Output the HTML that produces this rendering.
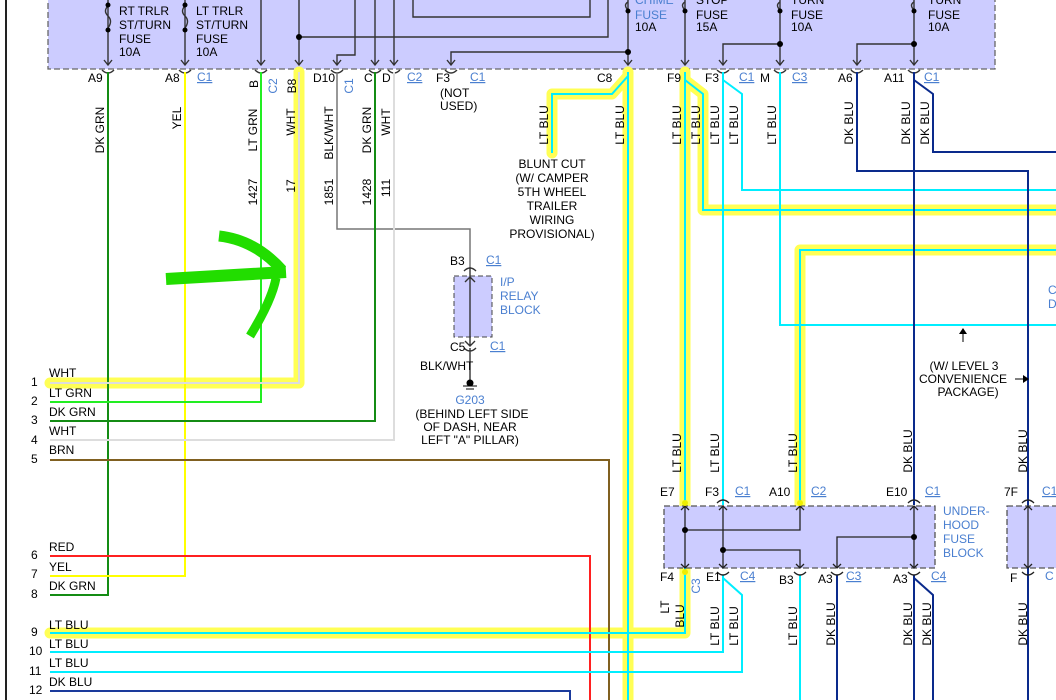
<!DOCTYPE html><html><head><meta charset="utf-8"><style>html,body{margin:0;padding:0;background:#fff}svg{display:block}text{font-family:"Liberation Sans",Arial,sans-serif;font-size:12px;fill:#000}.b{fill:#4a7fd0}.u{text-decoration:underline}</style></head><body>
<svg width="1056" height="700" viewBox="0 0 1056 700" xmlns="http://www.w3.org/2000/svg">
<line x1="6" y1="0" x2="6" y2="700" stroke="#222" stroke-width="2"/>
<rect x="48" y="-2" width="947" height="71" fill="#ccccff" stroke="#666" stroke-dasharray="6,3" stroke-width="1.3"/>
<g stroke="#333" stroke-width="1.4" fill="none">
<path d="M108 0V65M185 0V65M261 0V65M299 0V65M375 0V65M394 0V65M628 0V65M685 0V65M780 0V65M914 0V65"/>
<path d="M413 0V17H590V0M299 37H608V0M451 65V52H628M337 65V55H355V0M723 65V44H780M857 65V44H914"/>
<path d="M104 60l4 5 4-5M181 60l4 5 4-5M257 60l4 5 4-5M295 60l4 5 4-5M333 60l4 5 4-5M371 60l4 5 4-5M390 60l4 5 4-5M447 60l4 5 4-5M624 60l4 5 4-5M681 60l4 5 4-5M719 60l4 5 4-5M776 60l4 5 4-5M853 60l4 5 4-5M910 60l4 5 4-5"/>
<path d="M102 70q6 6 12 0M179 70q6 6 12 0M255 70q6 6 12 0M331 70q6 6 12 0M369 70q6 6 12 0M388 70q6 6 12 0M445 70q6 6 12 0M717 70q6 6 12 0M774 70q6 6 12 0M851 70q6 6 12 0M908 70q6 6 12 0"/>
<path d="M108 6q-5 5 0 10q5 5 0 12M185 6q-5 5 0 10q5 5 0 12M628 2q-5 3 0 8M685 2q-5 3 0 8M780 2q-5 3 0 8M914 2q-5 3 0 8"/>
</g>
<g fill="#000"><circle cx="108" cy="5" r="2.5"/><circle cx="108" cy="30" r="2.5"/><circle cx="185" cy="5" r="2.5"/><circle cx="185" cy="30" r="2.5"/><circle cx="299" cy="37" r="3"/><circle cx="628" cy="52" r="3"/><circle cx="628" cy="11" r="2.5"/><circle cx="685" cy="11" r="2.5"/><circle cx="780" cy="11" r="2.5"/><circle cx="914" cy="11" r="2.5"/><circle cx="780" cy="44" r="3"/><circle cx="914" cy="44" r="3"/></g>
<text x="119" y="15">RT TRLR</text><text x="119" y="29">ST/TURN</text><text x="119" y="43">FUSE</text><text x="119" y="56">10A</text>
<text x="196" y="15">LT TRLR</text><text x="196" y="29">ST/TURN</text><text x="196" y="43">FUSE</text><text x="196" y="56">10A</text>
<text x="635" y="4" class="b">CHIME</text><text x="635" y="19" class="b">FUSE</text><text x="635" y="31">10A</text>
<text x="696" y="4">STOP</text><text x="696" y="19">FUSE</text><text x="696" y="31">15A</text>
<text x="791" y="4">TURN</text><text x="791" y="19">FUSE</text><text x="791" y="31">10A</text>
<text x="928" y="4">TURN</text><text x="928" y="19">FUSE</text><text x="928" y="31">10A</text>
<g stroke="#ffff55" stroke-width="11" fill="none" stroke-linejoin="round" stroke-linecap="round">
<path d="M299 72V383H50"/>
<path d="M628 72V700M628 76L612 94H552V153"/>
<path d="M685 72V575M685 80L703 94V210H1056"/>
<path d="M1056 250H800V505"/>
<path d="M685 575V633H50"/>
</g>
<g fill="none" stroke-width="2">
<path d="M108 72V595H50" stroke="#148c14"/>
<path d="M185 72V576H50" stroke="#ffff00"/>
<path d="M261 72V402H50" stroke="#22ee22"/>
<path d="M299 72V383H50" stroke="#dddddd"/>
<path d="M337 72V229H470V267" stroke="#777" stroke-width="1.5"/>
<path d="M375 72V421H50" stroke="#148c14"/>
<path d="M394 72V440H50" stroke="#dddddd"/>
<path d="M50 460H609V700" stroke="#806020"/>
<path d="M50 556H590V700" stroke="#ff2020"/>
<path d="M50 691H570V700" stroke="#1a3a9c"/>
<path d="M628 72V700M628 76L612 94H552V153" stroke="#00eeff"/>
<path d="M685 72V575M685 80L703 94V210H1056" stroke="#00eeff"/>
<path d="M723 72V505M723 80L742 94V190H1056" stroke="#00eeff"/>
<path d="M780 72V325H1056" stroke="#00eeff"/>
<path d="M1056 250H800V505" stroke="#00eeff"/>
<path d="M685 575V633H50M723 575V652H50M723 578L742 595V672H50M800 575V700" stroke="#00eeff"/>
<path d="M857 72V171H1028V700M914 72V505M914 80L933 94V152H1056M837 575V700M914 575V700M914 578L933 595V700" stroke="#0a2a8c"/>
</g>
<text x="88" y="82">A9</text><text x="165" y="82">A8</text><text x="197" y="81" class="b u">C1</text>
<text x="313" y="82">D10</text><text x="364" y="82">C</text><text x="382" y="82">D</text><text x="407" y="81" class="b u">C2</text>
<text x="436" y="82">F3</text><text x="470" y="81" class="b u">C1</text><text x="440" y="97">(NOT</text><text x="440" y="110">USED)</text>
<text x="597" y="82">C8</text><text x="667" y="82">F9</text><text x="705" y="82">F3</text><text x="739" y="81" class="b u">C1</text><text x="760" y="82">M</text><text x="792" y="81" class="b u">C3</text>
<text x="838" y="82">A6</text><text x="884" y="82">A11</text><text x="924" y="81" class="b u">C1</text>
<g font-size="12">
<text transform="translate(258,84) rotate(-90)" text-anchor="middle">B</text>
<text transform="translate(277,86) rotate(-90)" text-anchor="middle" class="b">C2</text>
<text transform="translate(296,86) rotate(-90)" text-anchor="middle">B8</text>
<text transform="translate(353,86) rotate(-90)" text-anchor="middle" class="b">C1</text>
<text transform="translate(104,130) rotate(-90)" text-anchor="middle">DK GRN</text>
<text transform="translate(181,118) rotate(-90)" text-anchor="middle">YEL</text>
<text transform="translate(257,130) rotate(-90)" text-anchor="middle">LT GRN</text>
<text transform="translate(295,122) rotate(-90)" text-anchor="middle">WHT</text>
<text transform="translate(333,133) rotate(-90)" text-anchor="middle">BLK/WHT</text>
<text transform="translate(371,130) rotate(-90)" text-anchor="middle">DK GRN</text>
<text transform="translate(390,122) rotate(-90)" text-anchor="middle">WHT</text>
<text transform="translate(257,192) rotate(-90)" text-anchor="middle">1427</text>
<text transform="translate(295,186) rotate(-90)" text-anchor="middle">17</text>
<text transform="translate(333,192) rotate(-90)" text-anchor="middle">1851</text>
<text transform="translate(371,192) rotate(-90)" text-anchor="middle">1428</text>
<text transform="translate(390,188) rotate(-90)" text-anchor="middle">111</text>
<text transform="translate(548,125) rotate(-90)" text-anchor="middle">LT BLU</text>
<text transform="translate(624,125) rotate(-90)" text-anchor="middle">LT BLU</text>
<text transform="translate(681,125) rotate(-90)" text-anchor="middle">LT BLU</text>
<text transform="translate(700,125) rotate(-90)" text-anchor="middle">LT BLU</text>
<text transform="translate(719,125) rotate(-90)" text-anchor="middle">LT BLU</text>
<text transform="translate(738,125) rotate(-90)" text-anchor="middle">LT BLU</text>
<text transform="translate(776,125) rotate(-90)" text-anchor="middle">LT BLU</text>
<text transform="translate(853,123) rotate(-90)" text-anchor="middle">DK BLU</text>
<text transform="translate(910,123) rotate(-90)" text-anchor="middle">DK BLU</text>
<text transform="translate(929,123) rotate(-90)" text-anchor="middle">DK BLU</text>
<text transform="translate(681,453) rotate(-90)" text-anchor="middle">LT BLU</text>
<text transform="translate(719,453) rotate(-90)" text-anchor="middle">LT BLU</text>
<text transform="translate(797,453) rotate(-90)" text-anchor="middle">LT BLU</text>
<text transform="translate(912,451) rotate(-90)" text-anchor="middle">DK BLU</text>
<text transform="translate(1027,451) rotate(-90)" text-anchor="middle">DK BLU</text>
<text transform="translate(669,607) rotate(-90)" text-anchor="middle">LT</text>
<text transform="translate(684,616) rotate(-90)" text-anchor="middle">BLU</text>
<text transform="translate(700,586) rotate(-90)" text-anchor="middle" class="b">C3</text>
<text transform="translate(719,626) rotate(-90)" text-anchor="middle">LT BLU</text>
<text transform="translate(738,626) rotate(-90)" text-anchor="middle">LT BLU</text>
<text transform="translate(797,626) rotate(-90)" text-anchor="middle">LT BLU</text>
<text transform="translate(835,624) rotate(-90)" text-anchor="middle">DK BLU</text>
<text transform="translate(912,624) rotate(-90)" text-anchor="middle">DK BLU</text>
<text transform="translate(931,624) rotate(-90)" text-anchor="middle">DK BLU</text>
<text transform="translate(1027,624) rotate(-90)" text-anchor="middle">DK BLU</text>
</g>
<g text-anchor="middle"><text x="552" y="168">BLUNT CUT</text><text x="552" y="182">(W/ CAMPER</text><text x="552" y="196">5TH WHEEL</text><text x="552" y="210">TRAILER</text><text x="552" y="224">WIRING</text><text x="552" y="238">PROVISIONAL)</text></g>
<rect x="454" y="276" width="38" height="61" fill="#ccccff" stroke="#444" stroke-dasharray="5,3"/>
<path d="M470 267V346M465 282l5-5 5 5M464 271q6-6 12 0M465 341l5 5 5-5M464 348q6 6 12 0M470 348V380" stroke="#333" stroke-width="1.4" fill="none"/>
<text x="450" y="265">B3</text><text x="486" y="264" class="b u">C1</text>
<text x="500" y="286" class="b">I/P</text><text x="500" y="300" class="b">RELAY</text><text x="500" y="314" class="b">BLOCK</text>
<text x="450" y="351">C5</text><text x="490" y="350" class="b u">C1</text>
<text x="420" y="370">BLK/WHT</text>
<circle cx="470" cy="383" r="3.5"/><path d="M463 386H477M466 389H474" stroke="#000"/>
<g text-anchor="middle"><text x="470" y="404" class="b">G203</text><text x="472" y="418">(BEHIND LEFT SIDE</text><text x="470" y="431">OF DASH, NEAR</text><text x="470" y="444">LEFT "A" PILLAR)</text></g>
<path d="M963 342V332M1015 379H1024" stroke="#000" fill="none"/>
<path d="M959 334l4-6 4 6zM1023 375l6 4-6 4z" fill="#000"/>
<g text-anchor="middle"><text x="964" y="370">(W/ LEVEL 3</text><text x="963" y="383">CONVENIENCE</text><text x="968" y="396">PACKAGE)</text></g>
<text x="1048" y="294" class="b">C</text><text x="1048" y="308" class="b">D</text>
<rect x="664" y="506" width="271" height="62" fill="#ccccff" stroke="#555" stroke-dasharray="6,3" stroke-width="1.3"/>
<rect x="1007" y="506" width="60" height="62" fill="#ccccff" stroke="#555" stroke-dasharray="6,3" stroke-width="1.3"/>
<g stroke="#222" stroke-width="1.3" fill="none">
<path d="M685 506V568M723 506V568M914 506V568M1028 506V568"/>
<path d="M685 530H800V506M723 550H800V568M914 537H837V568"/>
<path d="M681 510l4-4 4 4M719 510l4-4 4 4M796 510l4-4 4 4M910 510l4-4 4 4M1024 510l4-4 4 4M681 564l4 4 4-4M719 564l4 4 4-4M796 564l4 4 4-4M833 564l4 4 4-4M910 564l4 4 4-4M1024 564l4 4 4-4"/>
<path d="M717 503q6-6 12 0M908 503q6-6 12 0M1022 503q6-6 12 0M717 572q6 6 12 0M794 572q6 6 12 0M831 572q6 6 12 0M908 572q6 6 12 0M1022 572q6 6 12 0"/>
</g>
<g><circle cx="685" cy="530" r="3"/><circle cx="723" cy="550" r="3"/><circle cx="914" cy="537" r="3"/><circle cx="685" cy="503" r="3" fill="#ee0"/><circle cx="800" cy="503" r="3" fill="#ee0"/><circle cx="685" cy="572" r="3" fill="#ee0"/></g>
<text x="660" y="496">E7</text><text x="705" y="496">F3</text><text x="735" y="495" class="b u">C1</text><text x="769" y="496">A10</text><text x="811" y="495" class="b u">C2</text><text x="886" y="496">E10</text><text x="925" y="495" class="b u">C1</text><text x="1004" y="496">7F</text><text x="1042" y="495" class="b u">C1</text>
<text x="943" y="515" class="b">UNDER-</text><text x="943" y="529" class="b">HOOD</text><text x="943" y="543" class="b">FUSE</text><text x="943" y="557" class="b">BLOCK</text>
<text x="660" y="581">F4</text><text x="706" y="581">E1</text><text x="740" y="580" class="b u">C4</text><text x="779" y="584">B3</text><text x="818" y="583">A3</text><text x="846" y="580" class="b u">C3</text><text x="893" y="583">A3</text><text x="931" y="580" class="b u">C4</text><text x="1010" y="582">F</text><text x="1045" y="580" class="b">C</text>
<g><text x="31" y="386">1</text><text x="49" y="377">WHT</text>
<text x="31" y="405">2</text><text x="49" y="397">LT GRN</text>
<text x="31" y="424">3</text><text x="49" y="416">DK GRN</text>
<text x="31" y="444">4</text><text x="49" y="435">WHT</text>
<text x="31" y="463">5</text><text x="49" y="454">BRN</text>
<text x="31" y="559">6</text><text x="49" y="551">RED</text>
<text x="31" y="578">7</text><text x="49" y="571">YEL</text>
<text x="31" y="598">8</text><text x="49" y="590">DK GRN</text>
<text x="31" y="636">9</text><text x="49" y="629">LT BLU</text>
<text x="29" y="655">10</text><text x="49" y="648">LT BLU</text>
<text x="29" y="675">11</text><text x="49" y="667">LT BLU</text>
<text x="29" y="694">12</text><text x="49" y="686">DK BLU</text></g>
<g stroke="#22dd00" fill="none" stroke-linecap="butt">
<path d="M166 279L286 272" stroke-width="12"/>
<path d="M219 236Q255 240 282 270" stroke-width="11"/>
<path d="M276 278Q272 300 250 336" stroke-width="9"/>
</g>
</svg>
</body></html>
